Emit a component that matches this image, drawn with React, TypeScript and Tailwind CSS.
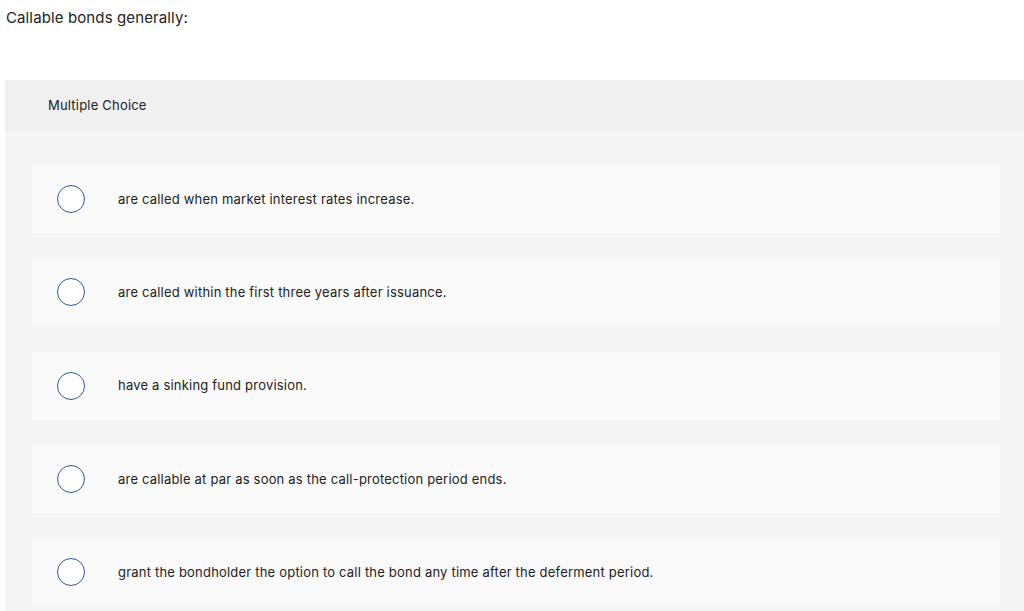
const options = [
  "are called when market interest rates increase.",
  "are called within the first three years after issuance.",
  "have a sinking fund provision.",
  "are callable at par as soon as the call-protection period ends.",
  "grant the bondholder the option to call the bond any time after the deferment period.",
];

export default function App() {
  return (
    <div className="min-h-screen bg-white text-[#222] font-['Inter','Liberation_Sans',sans-serif]">
      <h1 className="pl-[6px] pt-[7px] text-[15px] leading-[22px] tracking-[0.12px]">Callable bonds generally:</h1>

      <div className="ml-[5px] mt-[51px] bg-[#f5f5f5]">
        <div className="h-[51px] bg-[#f0f0f0] pl-[43px] flex items-center text-[13px] tracking-[0.2px]">
          Multiple Choice
        </div>
        <div className="pt-[34px] pl-[27px] pr-[24px] flex flex-col gap-[25.3px] pb-[10px]">
          {options.map((o) => (
            <div key={o} className="h-[68px] bg-[#fafafa] flex items-center">
              <span className="ml-[25px] w-[28px] h-[28px] rounded-full border border-[#2c5a92] bg-white shrink-0" />
              <span className="ml-[33px] text-[13px] tracking-[0.2px] pt-[1px]">{o}</span>
            </div>
          ))}
        </div>
      </div>
    </div>
  );
}
